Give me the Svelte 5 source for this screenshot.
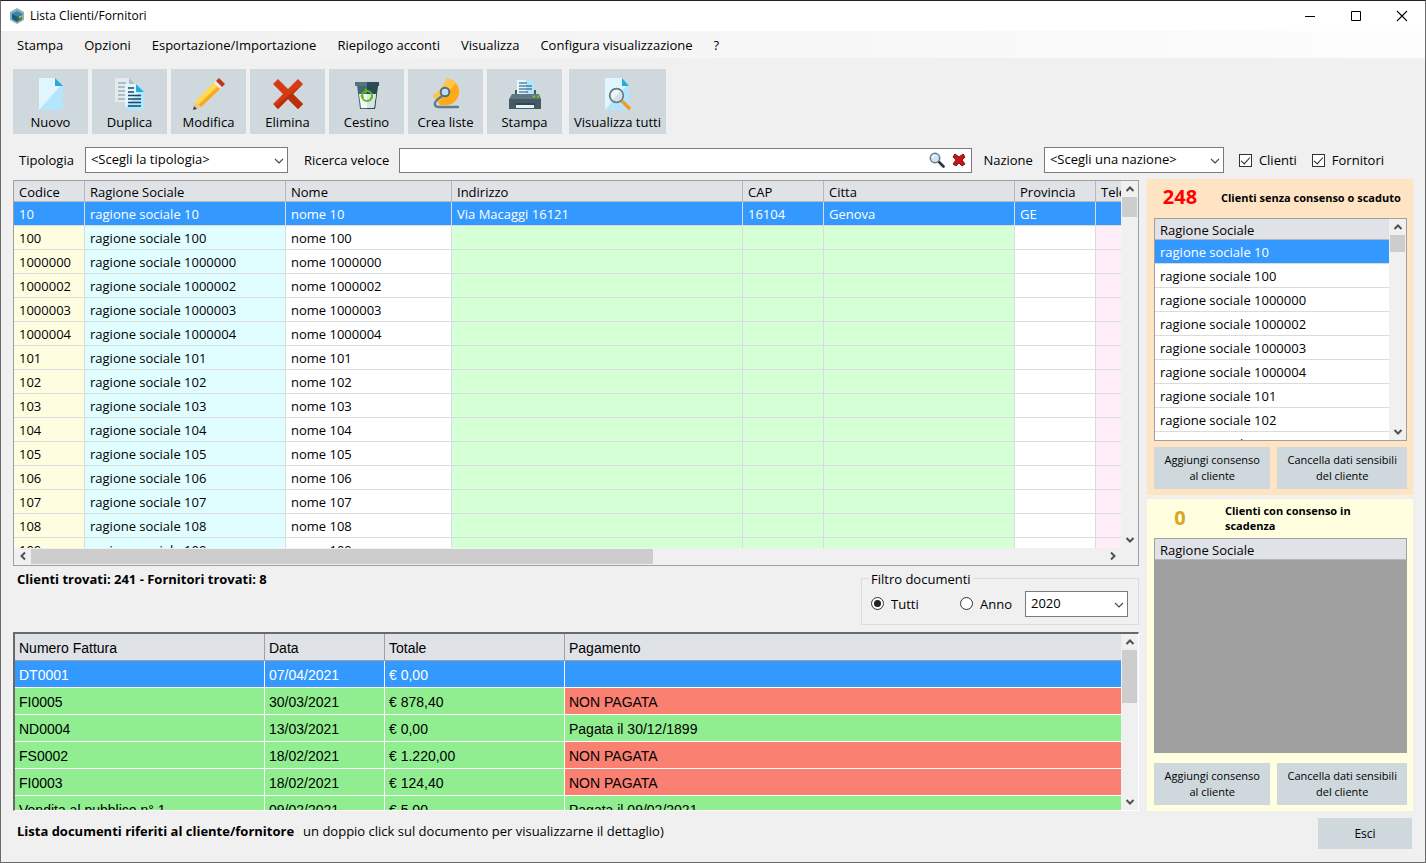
<script>
  const menu = ['Stampa', 'Opzioni', 'Esportazione/Importazione', 'Riepilogo acconti', 'Visualizza', 'Configura visualizzazione', '?'];

  const tools = [
    { label: 'Nuovo', icon: 'new' },
    { label: 'Duplica', icon: 'copy' },
    { label: 'Modifica', icon: 'edit' },
    { label: 'Elimina', icon: 'delete' },
    { label: 'Cestino', icon: 'bin' },
    { label: 'Crea liste', icon: 'list' },
    { label: 'Stampa', icon: 'print' },
    { label: 'Visualizza tutti', icon: 'view' }
  ];

  const codes = ['10', '100', '1000000', '1000002', '1000003', '1000004', '101', '102', '103', '104', '105', '106', '107', '108', '109'];
  const customers = codes.map((code, i) => ({
    code,
    company: `ragione sociale ${code}`,
    name: `nome ${code}`,
    address: i === 0 ? 'Via Macaggi 16121' : '',
    zip: i === 0 ? '16104' : '',
    city: i === 0 ? 'Genova' : '',
    province: i === 0 ? 'GE' : ''
  }));
  const expired = customers.slice(0, 9);

  const invoices = [
    { number: 'DT0001', date: '07/04/2021', total: '€ 0,00', payment: '' },
    { number: 'FI0005', date: '30/03/2021', total: '€ 878,40', payment: 'NON PAGATA' },
    { number: 'ND0004', date: '13/03/2021', total: '€ 0,00', payment: 'Pagata il 30/12/1899' },
    { number: 'FS0002', date: '18/02/2021', total: '€ 1.220,00', payment: 'NON PAGATA' },
    { number: 'FI0003', date: '18/02/2021', total: '€ 124,40', payment: 'NON PAGATA' },
    { number: 'Vendita al pubblico n° 1', date: '09/02/2021', total: '€ 5,00', payment: 'Pagata il 09/02/2021' }
  ];

  let selectedCustomer = $state(0);
  let selectedExpired = $state(0);
  let selectedInvoice = $state(0);
  let search = $state('');
  let showCustomers = $state(true);
  let showSuppliers = $state(true);
  let docFilter = $state('all');
</script>

{#snippet arrow(dir)}
  <svg class="arrow {dir}" viewBox="0 0 10 10" width="10" height="10" aria-hidden="true">
    <path d="M1.5 7 5 3.5 8.5 7" fill="none" stroke="#505050" stroke-width="2" />
  </svg>
{/snippet}

{#snippet vscroll(size)}
  <div class="vscroll">
    <button type="button" tabindex="-1" aria-label="Scorri su">{@render arrow('up')}</button>
    <div class="track"><div class="thumb" style="height: {size}%"></div></div>
    <button type="button" tabindex="-1" aria-label="Scorri giù">{@render arrow('down')}</button>
  </div>
{/snippet}

{#snippet chevron()}
  <svg class="chevron" viewBox="0 0 10 6" width="10" height="6" aria-hidden="true">
    <path d="M1 1l4 4 4-4" fill="none" stroke="#444" stroke-width="1.1" />
  </svg>
{/snippet}

{#snippet toolIcon(name)}
  <svg viewBox="0 0 32 32" width="32" height="32" aria-hidden="true">
    {#if name === 'new'}
      <path d="M4 0h16l8 8v24H4z" fill="#b3e5fc" />
      <path d="M4 0h16l5 8L4 32z" fill="#e1f5fe" />
      <path d="M20 0l8 8h-8z" fill="#29a9e1" />
    {:else if name === 'copy'}
      <path d="M1 0h14l6 6v18H1z" fill="#e4eaed" />
      <path d="M15 0l6 6h-6z" fill="#b0bec5" />
      <path d="M4 5h8M4 9h9M4 13h7M4 17h7M4 21h7" stroke="#78909c" stroke-width="1" />
      <path d="M11 6h12l7 7v19H11z" fill="#b3e5fc" />
      <path d="M11 6h12l3 7-15 17z" fill="#e1f5fe" />
      <path d="M22 6l8 8h-8z" fill="#29a9e1" />
      <path d="M14 10h6M14 14h6M14 17.5h13M14 21h13M14 24.5h13M14 28h13" stroke="#16496b" stroke-width="1.3" />
    {:else if name === 'edit'}
      <path d="M22 4l6 6L8 29 2 24z" fill="#ffc928" />
      <path d="M22 4l3 3L5 27l-3-3z" fill="#ffdc4d" />
      <path d="M26 8l2 2L8 29l-3-2z" fill="#f9a825" />
      <path d="M2 24l6 5-8 3z" fill="#f6c18b" />
      <path d="M1 28l3 3-4 1z" fill="#37474f" />
      <path d="M21 5l3-3 6 6-3 3z" fill="#e8eef1" />
      <path d="M23 3l3-3 6 6-3 3z" fill="#bf3518" />
    {:else if name === 'delete'}
      <path d="M6 1l10 10L26 1l5 5-10 10 10 10-5 5-10-10L6 31l-5-5 10-10L1 6z" fill="#d53c13" />
      <path d="M31 6L21 16l10 10-5 5-10-10L6 31l-3-3z" fill="#b9300d" />
    {:else if name === 'bin'}
      <path d="M6 7h21l-3 24H9z" fill="#486772" />
      <path d="M16 7h11l-3 24h-8z" fill="#294954" />
      <path d="M8 16h17l-2 14H10z" fill="#f5f8f8" />
      <path d="M16 16h9l-2 14h-7z" fill="#d9e3e5" />
      <path d="M4 4h24v4H4z" fill="#527580" />
      <path d="M16 4h12v4H16z" fill="#2c4c56" />
      <circle cx="16" cy="18" r="5" fill="none" stroke="#58bd16" stroke-width="2" />
      <path d="M14 10l4 3-4 2zM9 18l3-2 1 4zM22 20l-4 2 3-5z" fill="#58bd16" />
    {:else if name === 'list'}
      <path d="M17 0c8 2 13 8 12 15-1 8-7 12-12 12h-7l-7-9c4-3 7-6 9-9s4-5 5-9z" fill="#ffa914" />
      <path d="M17 0c4 1 7 3 9 5L8 25l-5-7c4-3 7-6 9-9s4-5 5-9z" fill="#ffc64a" />
      <path d="M12 18l-5 4c-4 4-2 7 2 7h19" fill="none" stroke="#607d8b" stroke-width="2.4" stroke-linecap="round" />
      <circle cx="15" cy="14" r="4.3" fill="#b9dff0" stroke="#546e7a" stroke-width="2" />
    {:else if name === 'print'}
      <path d="M8 2h17v15H8z" fill="#e5f7fe" />
      <path d="M17 2h8v15h-8z" fill="#b3e5fc" />
      <path d="M10 5h8M10 8h13M10 11h13M10 14h9" stroke="#174e70" stroke-width="1.1" />
      <path d="M6 12h2v5H6zM25 12h2v5h-2z" fill="#455a64" />
      <path d="M3 16h27l2 5H0z" fill="#607780" />
      <path d="M0 21h32v10H0z" fill="#455a64" />
      <path d="M7 27h18v3H7z" fill="#e1f5fe" />
      <path d="M6 26h20" stroke="#263238" />
      <circle cx="25" cy="18.500" r="1.200" fill="#73ca20" />
      <circle cx="29" cy="18.500" r="1.200" fill="#73ca20" />
    {:else}
      <path d="M3 0h17l7 8v24H3z" fill="#b3e5fc" />
      <path d="M3 0h17l4 8L3 32z" fill="#e1f5fe" />
      <path d="M20 0l7 8h-7z" fill="#29a9e1" />
      <path d="M20 23l8 8" stroke="#f49b20" stroke-width="3.600" />
      <circle cx="14.500" cy="17.500" r="6.800" fill="#eef4f6" stroke="#607d8b" stroke-width="1.800" />
      <path d="M10.500 21.500l8-8a5.500 5.500 0 0 1-8 8z" fill="#d3e0e6" />
    {/if}
  </svg>
{/snippet}

<div class="window">
  <header class="titlebar">
    <svg viewBox="0 0 16 16" width="16" height="16" aria-hidden="true">
      <path d="M8 0l7 4v8l-7 4-7-4V4z" fill="#8bb0b8" />
      <path d="M8 3l5 2.500-5 3-5-3z" fill="#3587ad" />
      <path d="M3 5.500l5 3V14l-5-3z" fill="#155b86" />
      <path d="M8 8.500l5-3V11l-5 3z" fill="#2d6c54" />
      <path d="M10 8l3-1v2l-3 2z" fill="#a6b94d" />
    </svg>
    <h1>Lista Clienti/Fornitori</h1>
    <div class="controls">
      <button type="button" aria-label="Riduci a icona">
        <svg viewBox="0 0 12 12" width="12" height="12"><path d="M1 6.500h10" stroke="#000" /></svg>
      </button>
      <button type="button" aria-label="Ingrandisci">
        <svg viewBox="0 0 12 12" width="12" height="12"><path d="M1.500 1.500h9v9h-9z" fill="none" stroke="#000" /></svg>
      </button>
      <button type="button" aria-label="Chiudi">
        <svg viewBox="0 0 12 12" width="12" height="12"><path d="M1 1l10 10M11 1L1 11" stroke="#000" stroke-width="1.100" /></svg>
      </button>
    </div>
  </header>

  <nav class="menubar">
    {#each menu as item}
      <button type="button">{item}</button>
    {/each}
  </nav>

  <div class="toolbar">
    {#each tools as tool}
      <button type="button" class:wide={tool.icon === 'view'}>
        {@render toolIcon(tool.icon)}
        <span>{tool.label}</span>
      </button>
    {/each}
  </div>

  <div class="filters">
    <label for="kind">Tipologia</label>
    <div class="combo kind">
      <select id="kind"><option>&lt;Scegli la tipologia&gt;</option></select>
      {@render chevron()}
    </div>
    <label class="quick" for="search">Ricerca veloce</label>
    <div class="search">
      <input id="search" type="text" bind:value={search} />
      <button type="button" aria-label="Cerca">
        <svg viewBox="0 0 16 16" width="16" height="16">
          <path d="M9.500 9.500l5 5" stroke="#30343a" stroke-width="2.600" stroke-linecap="round" />
          <circle cx="6" cy="6" r="4.700" fill="#cfe6f6" stroke="#6d7b87" stroke-width="1.500" />
          <path d="M3.500 6A2.500 2.500 0 0 1 6 3.500" fill="none" stroke="#fff" stroke-width="1.300" />
        </svg>
      </button>
      <button type="button" aria-label="Azzera ricerca" onclick={() => (search = '')}>
        <svg viewBox="0 0 14 14" width="14" height="14">
          <path d="M3 1l4 3 4-3 2 3-3 3 3 4-3 2-3-3-3 3-3-2 3-4-3-3z" fill="#c4161c" stroke="#8c1014" />
        </svg>
      </button>
    </div>
    <label for="nation">Nazione</label>
    <div class="combo nation">
      <select id="nation"><option>&lt;Scegli una nazione&gt;</option></select>
      {@render chevron()}
    </div>
    <label class="check first"><input type="checkbox" bind:checked={showCustomers} />Clienti</label>
    <label class="check"><input type="checkbox" bind:checked={showSuppliers} />Fornitori</label>
  </div>

  <main>
    <section class="left">
      <div class="grid customers">
        <div class="view">
          <div class="clip">
            <table>
              <colgroup>
                <col class="c-code" /><col class="c-company" /><col class="c-name" /><col class="c-address" />
                <col class="c-zip" /><col class="c-city" /><col class="c-province" /><col />
              </colgroup>
              <thead>
                <tr>
                  <th>Codice</th><th>Ragione Sociale</th><th>Nome</th><th>Indirizzo</th>
                  <th>CAP</th><th>Citta</th><th>Provincia</th><th>Tele</th>
                </tr>
              </thead>
              <tbody>
                {#each customers as c, i}
                  <tr class:selected={selectedCustomer === i} onclick={() => (selectedCustomer = i)}>
                    <td class="yellow">{c.code}</td>
                    <td class="cyan">{c.company}</td>
                    <td>{c.name}</td>
                    <td class="green">{c.address}</td>
                    <td class="green">{c.zip}</td>
                    <td class="green">{c.city}</td>
                    <td>{c.province}</td>
                    <td class="pink"></td>
                  </tr>
                {/each}
              </tbody>
            </table>
          </div>
          {@render vscroll(6)}
        </div>
        <div class="hscroll">
          <button type="button" tabindex="-1" aria-label="Scorri a sinistra">{@render arrow('prev')}</button>
          <div class="track"><div class="thumb" style="width: 58%"></div></div>
          <button type="button" tabindex="-1" aria-label="Scorri a destra">{@render arrow('next')}</button>
          <div class="corner"></div>
        </div>
      </div>

      <div class="status">
        <strong>Clienti trovati: 241 - Fornitori trovati: 8</strong>
        <fieldset>
          <legend>Filtro documenti</legend>
          <div class="options">
            <label class="radio all"><input type="radio" name="docs" value="all" bind:group={docFilter} />Tutti</label>
            <label class="radio"><input type="radio" name="docs" value="year" bind:group={docFilter} />Anno</label>
            <div class="combo year">
              <select aria-label="Anno documenti"><option>2020</option></select>
              {@render chevron()}
            </div>
          </div>
        </fieldset>
      </div>

      <div class="grid invoices">
        <div class="view">
          <div class="clip">
            <table>
              <colgroup><col class="i-number" /><col class="i-date" /><col class="i-total" /><col /></colgroup>
              <thead>
                <tr><th>Numero Fattura</th><th>Data</th><th>Totale</th><th>Pagamento</th></tr>
              </thead>
              <tbody>
                {#each invoices as inv, i}
                  <tr class:selected={selectedInvoice === i} onclick={() => (selectedInvoice = i)}>
                    <td>{inv.number}</td>
                    <td>{inv.date}</td>
                    <td>{inv.total}</td>
                    <td class:unpaid={inv.payment === 'NON PAGATA'}>{inv.payment}</td>
                  </tr>
                {/each}
              </tbody>
            </table>
          </div>
          {@render vscroll(37)}
        </div>
      </div>
    </section>

    <aside>
      <section class="panel expired">
        <div class="head"><b>248</b><h2>Clienti senza consenso o scaduto</h2></div>
        <div class="grid">
          <div class="view">
            <div class="clip">
              <table>
                <thead><tr><th>Ragione Sociale</th></tr></thead>
                <tbody>
                  {#each expired as c, i}
                    <tr class:selected={selectedExpired === i} onclick={() => (selectedExpired = i)}>
                      <td>{c.company}</td>
                    </tr>
                  {/each}
                </tbody>
              </table>
            </div>
            {@render vscroll(9)}
          </div>
        </div>
        <div class="actions">
          <button type="button">Aggiungi consenso<br />al cliente</button>
          <button type="button">Cancella dati sensibili<br />del cliente</button>
        </div>
      </section>

      <section class="panel expiring">
        <div class="head"><b>0</b><h2>Clienti con consenso in scadenza</h2></div>
        <div class="grid empty">
          <table>
            <thead><tr><th>Ragione Sociale</th></tr></thead>
          </table>
        </div>
        <div class="actions">
          <button type="button">Aggiungi consenso<br />al cliente</button>
          <button type="button">Cancella dati sensibili<br />del cliente</button>
        </div>
      </section>
    </aside>
  </main>

  <footer>
    <p><strong>Lista documenti riferiti al cliente/fornitore</strong>un doppio click sul documento per visualizzarne il dettaglio)</p>
    <button type="button">Esci</button>
  </footer>
</div>

<style>
  :global(body) {
    margin: 0;
  }

  .window,
  .window * {
    box-sizing: border-box;
  }

  .window {
    display: flex;
    flex-direction: column;
    height: 100vh;
    min-height: 720px;
    border: 1px solid #6a6a6a;
    border-top-color: #231f2b;
    background: #f0f0f0;
    color: #000;
    font: 13px/18px 'Open Sans', 'Noto Sans', sans-serif;
  }

  button,
  select,
  input {
    margin: 0;
    font: inherit;
    color: inherit;
  }

  button {
    padding: 0;
    border: 0;
    background: none;
  }

  .titlebar {
    display: flex;
    flex: none;
    align-items: center;
    height: 30px;
    padding-left: 8px;
    background: #fff;
  }

  .titlebar h1 {
    flex: 1;
    margin: 0 0 0 5px;
    font-size: 12px;
    font-weight: 400;
  }

  .controls {
    display: flex;
  }

  .controls button {
    display: grid;
    place-items: center;
    width: 46px;
    height: 28px;
  }

  .menubar {
    display: flex;
    flex: none;
    align-items: center;
    gap: 21px;
    height: 27px;
    padding: 0 16px;
    background: linear-gradient(to right, #f0f0f0 10%, #fdfdfd);
  }

  .toolbar {
    display: flex;
    flex: none;
    gap: 4px;
    padding: 11px 12px 0;
  }

  .toolbar button {
    display: flex;
    flex-direction: column;
    align-items: center;
    width: 75px;
    height: 65px;
    padding-top: 9px;
    background: #cfd8dd;
    line-height: 24px;
  }

  .toolbar .wide {
    width: 97px;
    margin-left: 3px;
  }

  .filters {
    display: flex;
    flex: none;
    align-items: center;
    height: 45px;
    padding: 7px 12px 0 18px;
  }

  .combo {
    position: relative;
    height: 26px;
  }

  .combo select {
    width: 100%;
    height: 100%;
    padding: 0 20px 2px 5px;
    border: 1px solid #7a7a7a;
    border-radius: 0;
    background: #fff;
    appearance: none;
    font-size: 13px;
  }

  .chevron {
    position: absolute;
    top: 11px;
    right: 4px;
    pointer-events: none;
  }

  .kind {
    width: 203px;
    margin: 0 16px 0 11px;
  }

  .quick {
    margin-right: 10px;
  }

  .search {
    display: flex;
    flex: 1;
    align-items: center;
    gap: 7px;
    height: 25px;
    margin-right: 11px;
    padding-right: 5px;
    border: 1px solid #7a7a7a;
    background: #fff;
  }

  .search input {
    flex: 1;
    min-width: 0;
    border: 0;
    outline: 0;
    background: none;
  }

  .search button {
    display: flex;
  }

  .nation {
    width: 180px;
    margin-left: 11px;
  }

  .check {
    display: flex;
    align-items: center;
    gap: 7px;
    margin-left: 15px;
  }

  .check:last-child {
    margin-right: 29px;
  }

  .check input {
    display: grid;
    place-items: center;
    width: 13px;
    height: 13px;
    border: 1px solid #333;
    background: #fff;
    appearance: none;
  }

  .check input:checked::after {
    content: '';
    width: 4px;
    height: 8px;
    margin-bottom: 3px;
    border: solid #222;
    border-width: 0 1px 1px 0;
    rotate: 42deg;
  }

  main {
    display: flex;
    flex: 1;
    gap: 8px;
    min-height: 0;
    padding: 0 12px;
  }

  .left {
    display: flex;
    flex: 1;
    flex-direction: column;
    min-width: 0;
    padding-top: 1px;
  }

  .grid {
    display: flex;
    flex-direction: column;
    min-height: 0;
    border: 1px solid #a0a0a0;
    background: #fff;
  }

  .customers {
    flex: 387 1 0;
  }

  .invoices {
    flex: 178 1 0;
    border-width: 2px 1px 1px 2px;
    border-color: #696969 #fff #fff #696969;
    font-family: 'Liberation Sans', Arial, sans-serif;
    font-size: 14px;
  }

  .view {
    display: flex;
    flex: 1;
    min-height: 0;
  }

  .clip {
    flex: 1;
    min-width: 0;
    overflow: hidden;
  }

  table {
    width: 100%;
    border-spacing: 0;
    table-layout: fixed;
  }

  th,
  td {
    overflow: hidden;
    height: 24px;
    padding: 0 5px;
    border-right: 1px solid #d9dcdc;
    border-bottom: 1px solid #d9dcdc;
    text-align: left;
    font-weight: 400;
    white-space: nowrap;
  }

  th {
    height: 21px;
    padding-top: 2px;
    border-color: #b4b8bc;
    background: #dfe2e7;
  }

  th:last-child,
  td:last-child {
    border-right: 0;
  }

  .customers th:last-child {
    padding-right: 0;
  }

  .c-code { width: 71px; }
  .c-company { width: 201px; }
  .c-name { width: 166px; }
  .c-address { width: 291px; }
  .c-zip { width: 81px; }
  .c-city { width: 191px; }
  .c-province { width: 81px; }

  .yellow { background: #fffde0; }
  .cyan { background: #e0fdff; }
  .green { background: #d5ffd5; }
  .pink { background: #ffeef7; }

  .selected td {
    background: #3399ff;
    color: #fff;
  }

  .i-number { width: 250px; }
  .i-date { width: 120px; }
  .i-total { width: 180px; }

  .invoices th {
    height: 27px;
    padding: 2px 4px 0;
    border-color: #a0a0a0;
  }

  .invoices td {
    height: 27px;
    padding: 2px 4px 0;
    border-color: #fff;
    background: #90ee90;
  }

  .invoices .selected td {
    background: #3399ff;
  }

  .invoices td.unpaid {
    background: #fa8072;
  }

  .vscroll {
    display: flex;
    flex: none;
    flex-direction: column;
    width: 17px;
    padding: 0 1px;
    background: #f0f0f0;
  }

  .vscroll button,
  .hscroll button {
    display: grid;
    flex: none;
    place-items: center;
    height: 16px;
  }

  .track {
    flex: 1;
  }

  .thumb {
    background: #cdcdcd;
  }

  .hscroll {
    display: flex;
    flex: none;
    height: 17px;
    padding: 1px 0;
    background: #f0f0f0;
  }

  .hscroll button {
    width: 17px;
    height: 15px;
  }

  .hscroll .thumb {
    height: 100%;
  }

  .corner {
    width: 17px;
  }

  .arrow.down { rotate: 180deg; }
  .arrow.prev { rotate: -90deg; }
  .arrow.next { rotate: 90deg; }

  .status {
    display: flex;
    flex: none;
    align-items: flex-start;
    justify-content: space-between;
    height: 66px;
    padding: 4px 0 0 4px;
  }

  fieldset {
    width: 278px;
    height: 55px;
    margin: 0;
    padding: 0 10px 0 9px;
    border: 1px solid #dcdcdc;
  }

  legend {
    margin-left: -2px;
    padding: 0 2px;
  }

  .options {
    display: flex;
    align-items: center;
    padding-top: 3px;
  }

  .radio {
    display: flex;
    align-items: center;
    gap: 7px;
  }

  .all {
    flex: 1;
  }

  .radio input {
    display: grid;
    place-items: center;
    width: 13px;
    height: 13px;
    border: 1px solid #333;
    border-radius: 50%;
    background: #fff;
    appearance: none;
  }

  .radio input:checked::after {
    content: '';
    width: 7px;
    height: 7px;
    border-radius: 50%;
    background: #222;
  }

  .year {
    width: 103px;
    margin-left: 13px;
  }

  aside {
    display: flex;
    flex: none;
    flex-direction: column;
    gap: 4px;
    width: 266px;
  }

  .panel {
    display: flex;
    flex-direction: column;
    min-height: 0;
    padding: 0 6px 6px 7px;
  }

  .expired {
    flex: 316 1 0;
    background: #ffe4c4;
  }

  .expiring {
    flex: 312 1 0;
    background: #ffffe0;
  }

  .head {
    display: flex;
    flex: none;
    align-items: center;
    height: 39px;
  }

  .expired .head {
    padding-bottom: 3px;
  }

  .head b {
    width: 52px;
    color: #f00;
    font-size: 20px;
    text-align: center;
  }

  .head h2 {
    flex: 1;
    margin: 0;
    padding-left: 15px;
    font-size: 11px;
    line-height: 15px;
    white-space: nowrap;
  }

  .expiring .head b {
    color: #daa520;
  }

  .expiring .head h2 {
    padding: 0 40px 0 19px;
    white-space: normal;
  }

  .panel .grid {
    flex: 1;
  }

  .panel .grid.empty {
    margin-bottom: 4px;
    background: #a0a0a0;
  }

  .actions {
    display: grid;
    flex: none;
    grid-template-columns: 116fr 129fr;
    gap: 7px;
    padding-top: 6px;
  }

  .actions button {
    height: 42px;
    background: #cfd8dd;
    font-size: 11px;
    line-height: 16px;
  }

  footer {
    display: flex;
    flex: none;
    align-items: flex-start;
    justify-content: space-between;
    height: 51px;
    padding: 7px 13px 0 16px;
  }

  footer p {
    margin: 4px 0 0;
    font-size: 13px;
  }

  footer strong {
    margin-right: 9px;
  }

  footer button {
    width: 94px;
    height: 31px;
    background: #cfd8dd;
    font-size: 12px;
  }
</style>
